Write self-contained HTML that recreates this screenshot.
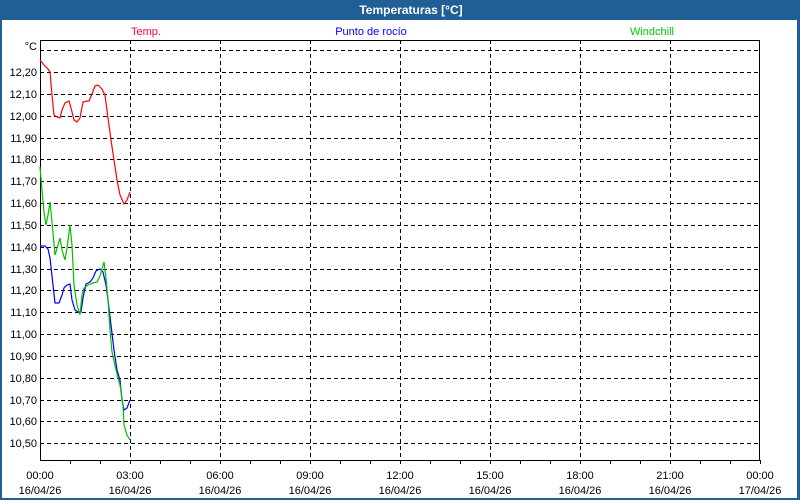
<!DOCTYPE html>
<html><head><meta charset="utf-8"><style>
body{margin:0;width:800px;height:500px;overflow:hidden;background:#fff;font-family:"Liberation Sans",sans-serif}
</style></head><body>
<svg width="800" height="500" xmlns="http://www.w3.org/2000/svg" style="display:block">
<rect x="0" y="0" width="800" height="500" fill="#1f5f96"/>
<rect x="2" y="20" width="795" height="478" fill="#fff"/>
<text x="411" y="14" font-size="12" font-weight="bold" fill="#fff" text-anchor="middle" font-family="Liberation Sans, sans-serif">Temperaturas [°C]</text>
<g font-size="11" font-family="Liberation Sans, sans-serif">
<text x="146" y="35" fill="#ff0040" text-anchor="middle">Temp.</text>
<text x="371" y="35" fill="#0000ff" text-anchor="middle">Punto de rocío</text>
<text x="652" y="35" fill="#00cc00" text-anchor="middle">Windchill</text>
</g>
<g stroke="#000" stroke-width="1" stroke-dasharray="4,3" fill="none" shape-rendering="crispEdges">
<path d="M40 50.5H760M40 72.5H760M40 94.5H760M40 116.5H760M40 138.5H760M40 159.5H760M40 181.5H760M40 203.5H760M40 225.5H760M40 247.5H760M40 269.5H760M40 290.5H760M40 312.5H760M40 334.5H760M40 356.5H760M40 378.5H760M40 400.5H760M40 421.5H760M40 443.5H760"/>
<path d="M130.5 40V460M220.5 40V460M310.5 40V460M400.5 40V460M490.5 40V460M580.5 40V460M670.5 40V460"/>
</g>
<g stroke="#000" stroke-width="1" fill="none" shape-rendering="crispEdges">
<rect x="40.5" y="40.5" width="719" height="420"/>
<path d="M70.5 460V464M100.5 460V464M130.5 460V464M160.5 460V464M190.5 460V464M220.5 460V464M250.5 460V464M280.5 460V464M310.5 460V464M340.5 460V464M370.5 460V464M400.5 460V464M430.5 460V464M460.5 460V464M490.5 460V464M520.5 460V464M550.5 460V464M580.5 460V464M610.5 460V464M640.5 460V464M670.5 460V464M700.5 460V464M730.5 460V464M760.5 460V464"/>
</g>
<g font-size="11" font-family="Liberation Sans, sans-serif" fill="#000" text-anchor="end">
<text x="37" y="50">°C</text>
<text x="37" y="76">12,20</text><text x="37" y="98">12,10</text><text x="37" y="120">12,00</text><text x="37" y="142">11,90</text><text x="37" y="163">11,80</text><text x="37" y="185">11,70</text><text x="37" y="207">11,60</text><text x="37" y="229">11,50</text><text x="37" y="251">11,40</text><text x="37" y="273">11,30</text><text x="37" y="294">11,20</text><text x="37" y="316">11,10</text><text x="37" y="338">11,00</text><text x="37" y="360">10,90</text><text x="37" y="382">10,80</text><text x="37" y="404">10,70</text><text x="37" y="425">10,60</text><text x="37" y="447">10,50</text>
</g>
<g font-size="11" font-family="Liberation Sans, sans-serif" fill="#000" text-anchor="middle">
<text x="40" y="479">00:00</text><text x="40" y="494">16/04/26</text>
<text x="130" y="479">03:00</text><text x="130" y="494">16/04/26</text>
<text x="220" y="479">06:00</text><text x="220" y="494">16/04/26</text>
<text x="310" y="479">09:00</text><text x="310" y="494">16/04/26</text>
<text x="400" y="479">12:00</text><text x="400" y="494">16/04/26</text>
<text x="490" y="479">15:00</text><text x="490" y="494">16/04/26</text>
<text x="580" y="479">18:00</text><text x="580" y="494">16/04/26</text>
<text x="670" y="479">21:00</text><text x="670" y="494">16/04/26</text>
<text x="760" y="479">00:00</text><text x="760" y="494">17/04/26</text>
</g>
<g fill="none" stroke-width="1.2">
<polyline stroke="#ff0000" points="40,60 44,65 48,69 50,72 52,95 54,115 57,117 60,118 62,110 65,103 69,101 71,108 74,120 77,122 80,118 83,102 87,101 89,101 92,94 95,86 98,85 102,89 105,95 108,118 111,140 114,160 117,180 120,195 124,204 127,200 130,192"/>
<polyline stroke="#0000ff" points="40,246 45,246 48,249 50,258 53,285 55,303 59,303 62,295 64,288 67,285 70,284 72,300 75,310 78,312 81,312 83,298 86,284 90,282 93,278 96,271 100,269 103,272 106,285 108,300 111,325 114,350 117,370 120,380 122,400 124,410 127,408 130,400"/>
<polyline stroke="#00c000" points="40,167 42,190 44,212 46,225 48,215 50,202 52,222 55,255 58,245 60,238 62,250 65,260 67,248 70,225 72,245 74,285 77,305 80,315 82,295 84,288 88,285 93,283 97,282 100,276 104,262 106,278 108,300 110,330 112,352 116,370 120,385 123,405 124,425 127,435 130,440"/>
</g>
</svg>
</body></html>
